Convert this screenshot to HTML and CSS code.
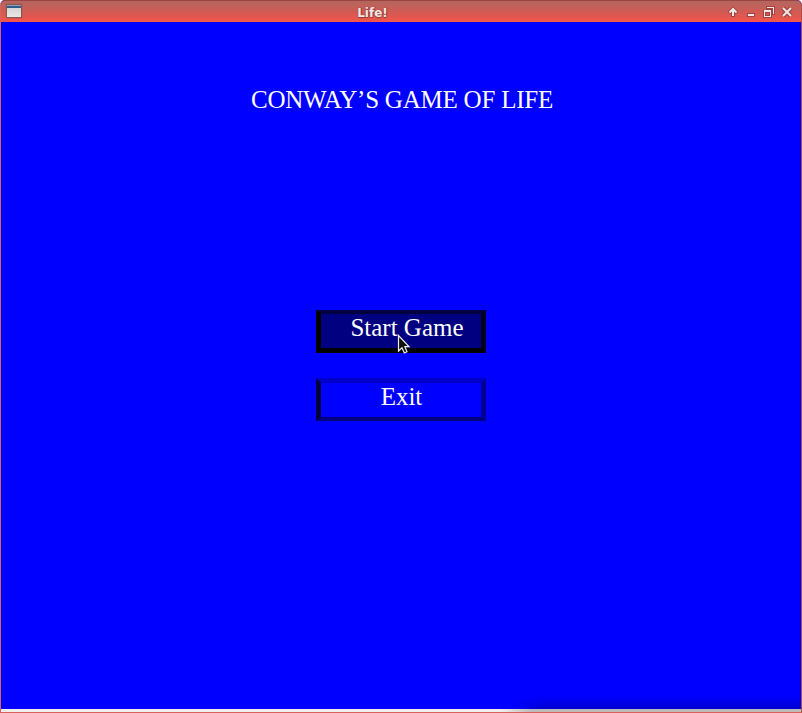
FILE: index.html
```html
<!DOCTYPE html>
<html lang="en">
<head>
<meta charset="utf-8">
<title>Life!</title>
<link rel="stylesheet" href="styles.css">
</head>
<body>
<div class="window">
  <header class="titlebar">
    <span class="app-icon"></span>
    <span class="title">Life!</span>
    <svg class="controls" width="80" height="22" viewBox="722 0 80 22" shape-rendering="crispEdges">
      <g stroke="#9c433f" fill="none" shape-rendering="auto">
        <path d="M733 17V9M729 13L733 9L737 13" stroke-width="4"/>
        <path d="M783 8L791 16M791 8L783 16" stroke-width="4.500"/>
      </g>
      <g stroke="#f1e7e6" stroke-width="2" fill="none" shape-rendering="auto">
        <path d="M733 16V9M729.500 12.500L733 9L736.500 12.500"/>
        <path d="M783 8L791 16M791 8L783 16"/>
      </g>
      <path fill="#9c433f" d="M747 13h8v4h-8zM766 6h9v9h-9z"/>
      <path fill="#f1e7e6" d="M748 14h6v2h-6z"/>
      <path fill="#f1e7e6" d="M767 7h7v7h-1v-6h-6z"/>
      <path fill="#9c433f" d="M763 10h9v8h-9z"/>
      <path fill="#f1e7e6" d="M764 10h7v7h-7z"/>
      <path fill="#9c433f" d="M765 12h5v4h-5z"/>
      <path fill="#dc5850" d="M766 13h3v2h-3z"/>
    </svg>
  </header>
  <main class="game">
    <h1 class="heading">CONWAY’S GAME OF LIFE</h1>
    <nav class="menu">
      <button class="button start">Start Game</button>
      <button class="button exit">Exit</button>
    </nav>
  </main>
  <footer class="strip"></footer>
  <svg class="cursor" width="14" height="21" viewBox="0 0 14 21">
    <path d="M1.500 1.500V17L5 13.700L7.300 19L10 17.800L7.900 12.700H12Z" fill="#10100c" stroke="#eee" stroke-width="1.200"/>
  </svg>
</div>
</body>
</html>
```

FILE: styles.css
```css
body {
  margin: 0;
  background: #fff;
  overflow: hidden;
}

.window {
  position: relative;
  box-sizing: border-box;
  width: 802px;
  height: 713px;
  display: flex;
  flex-direction: column;
  border: 1px solid #d9605c;
  border-top: 0;
  border-right-color: #b04c47;
  border-radius: 5px 5px 0 0;
  overflow: hidden;
  background: #00f;
}

.titlebar {
  box-sizing: border-box;
  flex: none;
  height: 22px;
  display: grid;
  grid-template-columns: 80px 1fr 80px;
  grid-template-rows: 21px;
  margin: 0 -1px;
  border-top: 1px solid #9b4440;
  border-radius: 5px 5px 0 0;
  background: linear-gradient(#b46660, #d05b54 50%, #f4544a);
}

.app-icon {
  box-sizing: border-box;
  width: 14px;
  height: 12px;
  margin: 4px 0 0 7px;
  border-top: 1px solid #8ea4bc;
  background: linear-gradient(#325b8c 2px, #d5d5d5 2px, #e8e8e4);
  box-shadow: 0 0 1px 1px #8a5550;
}

.title {
  padding-right: 57px;
  text-align: center;
  font: bold 12px/25px "DejaVu Sans", sans-serif;
  color: #f3e8e7;
  text-shadow: 0 0 1px #8e3b37, 0 1px 1px #8e3b37, 1px 0 1px #8e3b37;
}

.controls {
  margin-top: -1px;
}

.game {
  flex: 1;
  display: flex;
  flex-direction: column;
  align-items: center;
  color: #fff;
}

.heading {
  margin: 63px 0 0 2px;
  height: 225px;
  font: 25px/30px "Liberation Serif", serif;
  letter-spacing: -0.22px;
  white-space: nowrap;
}

.menu {
  display: grid;
  gap: 25px;
}

.button {
  box-sizing: border-box;
  width: 170px;
  height: 43px;
  padding: 0 0 0 1px;
  border-style: solid;
  border-width: 4px 5px 5px;
  font: 25px/28px "Liberation Serif", serif;
  color: #fff;
  display: flex;
  justify-content: center;
}

.start {
  padding-left: 12px;
  border-color: #000040 #000020 #000 #000;
  background: #000080;
}

.exit {
  border-width: 5px 5px 4px;
  border-color: #0000c8 #000096 #000080 #000040;
  background: #00f;
}

.strip {
  flex: 0 0 3px;
  position: relative;
  background: linear-gradient(90deg, #f0efee 500px, #bdbbb9 530px);
}

.strip::before {
  content: "";
  position: absolute;
  right: 0;
  bottom: 3px;
  width: 290px;
  height: 13px;
  background: linear-gradient(transparent, rgba(0, 0, 0, 0.19));
  -webkit-mask-image: linear-gradient(90deg, transparent, #000 35px);
  mask-image: linear-gradient(90deg, transparent, #000 35px);
}

.cursor {
  position: absolute;
  left: 396px;
  top: 334px;
}
```
